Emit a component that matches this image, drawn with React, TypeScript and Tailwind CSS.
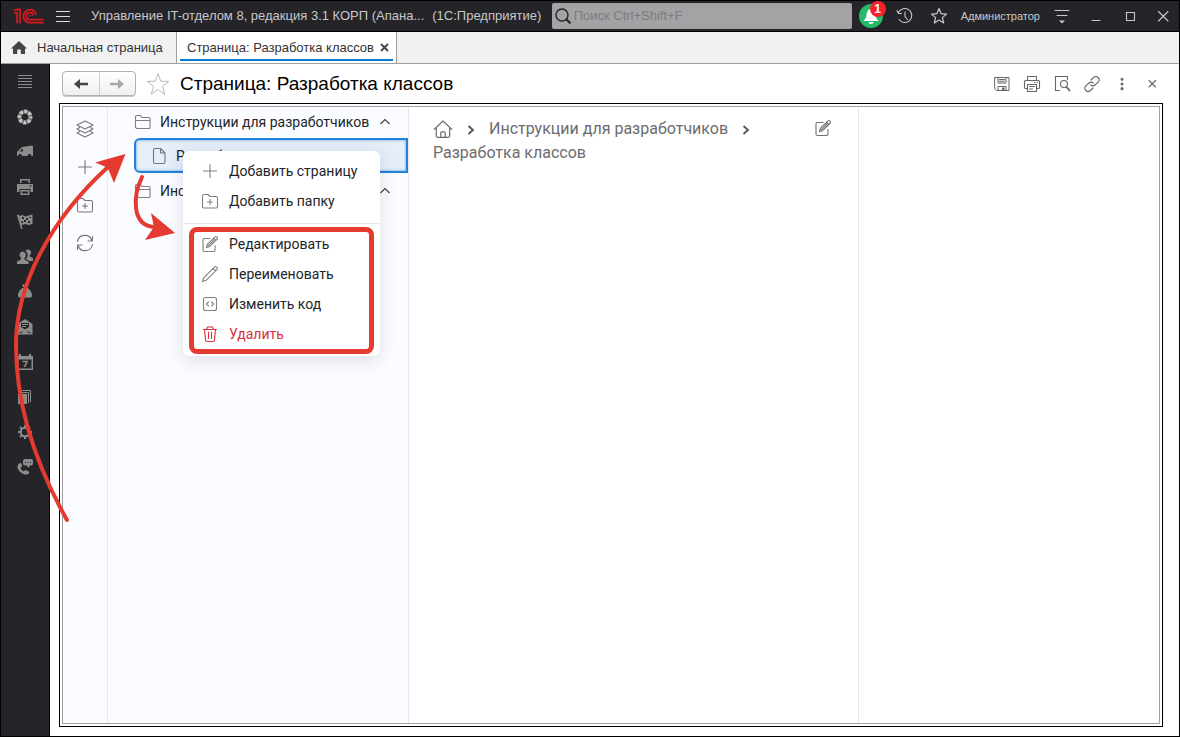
import type { ReactNode } from "react";
import { useState } from "react";

type IconProps = { children: ReactNode; size?: number; className?: string; width?: number };

// Stroke icons share one 18-unit grid
function Line({ children, size = 18, className = "", width = 1.1 }: IconProps) {
  return (
    <svg
      width={size}
      height={size}
      viewBox="0 0 18 18"
      fill="none"
      stroke="currentColor"
      strokeWidth={width}
      strokeLinecap="round"
      strokeLinejoin="round"
      className={`shrink-0 ${className}`}
      aria-hidden="true"
    >
      {children}
    </svg>
  );
}

const pencilBox = (
  <>
    <path d="M9 3.500H3.500A1.500 1.500 0 0 0 2 5v10a1.500 1.500 0 0 0 1.500 1.500h9A1.500 1.500 0 0 0 14 15v-4.500" />
    <path d="M5.500 12.500l.8-3.100L14 1.800a1.200 1.200 0 0 1 1.700 0l.5.5a1.200 1.200 0 0 1 0 1.700L8.600 11.700zM12.600 3.200l2.200 2.200M7.200 10.800L13 5" />
  </>
);
const pencil = (
  <path d="M1.500 16.500l1.200-3.700L13.600 1.900a1.300 1.300 0 0 1 1.800 0l.7.7a1.300 1.300 0 0 1 0 1.800L5.200 15.300zM12 3.500l2.500 2.500" />
);
const codeBox = (
  <>
    <rect x="2.500" y="2.500" width="13" height="13" rx="2" />
    <path d="M7.500 7L5.500 9l2 2M10.500 7l2 2-2 2" />
  </>
);
const trash = (
  <path d="M2.500 4.500h13M5.500 4.500l1-2.500h5l1 2.500M3.500 4.500l1 10.500a1.600 1.600 0 0 0 1.600 1.500h5.800a1.600 1.600 0 0 0 1.600-1.500l1-10.500M7.500 7v6.500M10.500 7v6.500" />
);
const plus = <path d="M9 2.500v13M2.500 9h13" />;
const folderPlus = (
  <>
    <path d="M1.500 14.500V4A1.500 1.500 0 0 1 3 2.500h4l2 2h6A1.500 1.500 0 0 1 16.500 6v8.500a1.500 1.500 0 0 1-1.500 1.500H3a1.500 1.500 0 0 1-1.500-1.500z" />
    <path d="M9 7.500v5M6.500 10h5" />
  </>
);
const folder = (
  <path d="M1.500 14.500v-11a1 1 0 0 1 1-1h4l1.500 2h7a1 1 0 0 1 1 1v9a1 1 0 0 1-1 1h-12a1 1 0 0 1-1-1zM1.500 7.500h14.500" />
);
const layers = (
  <path d="M9 1l8 4-8 4-8-4zM3.500 7.500L1 9l8 4 8-4-2.500-1.500M3.500 11.500L1 13l8 4 8-4-2.500-1.500" />
);
const refresh = (
  <path d="M1.500 7.500A7.500 7.500 0 0 1 16 6.500M16.500 2.500v4.500H12M16.500 10.500A7.500 7.500 0 0 1 2 11.500M1.500 15.500V11H6" />
);

const sections = [
  {
    label: "Главное",
    icon: <path d="M3 3.500h14M3 6.500h14M3 9.500h14M3 12.500h14M3 15.500h14" fill="none" stroke="currentColor" />,
  },
  {
    label: "Поддержка",
    icon: (
      <g fill="none">
        <circle cx="10" cy="10" r="5.500" stroke="#777" strokeWidth="3.600" />
        <circle
          cx="10"
          cy="10"
          r="5.500"
          stroke="#c4c4c4"
          strokeWidth="4"
          strokeDasharray="2.600 1.720"
          strokeDashoffset="1.300"
        />
      </g>
    ),
  },
  {
    label: "Закупки",
    icon: (
      <path d="M2 14v-4l5-5 10-1.500 1 1V14h-1.500a2 2 0 0 0-4 0H7a2 2 0 0 0-4 0zM4.500 9.500H8v-3z" fillRule="evenodd" />
    ),
  },
  {
    label: "Оборудование",
    icon: (
      <path
        d="M5 2h10v4H5zM6.500 3.500V6h7V3.500zM2 7h16v8h-2.500v-3h-11v3H2zM5.500 13h9v5h-9zM7 14.500v2h6v-2zM14.500 8.500h2v1h-2z"
        fillRule="evenodd"
      />
    ),
  },
  {
    label: "Проекты",
    icon: (
      <path
        d="M2 3l2-.5L7.500 17H6zM4.500 4l3-1 3 1.500 3-1 4-1V12l-4 1-3-1-4 1zM7 5v2h2V5zm4 1v2h2V6zm3-1v1h2V5zM9 8v2h2V8zm4 1v2h2V9zM6.500 9v2h1.500V9z"
        fillRule="evenodd"
      />
    ),
  },
  {
    label: "Сотрудники",
    icon: (
      <path d="M7.500 4.500a3.500 3.500 0 0 1 2 6.300v1.700l4 2V17H2v-2.500l4-2v-1.700a3.500 3.500 0 0 1 1.500-6.300zM13 2.500a3 3 0 0 1 1.800 5.500v1.500l3.200 1.700V14h-3.500l-3.500-2a5 5 0 0 0-.7-8A3 3 0 0 1 13 2.500z" />
    ),
  },
  {
    label: "Финансы",
    icon: <path d="M7 2.500h6l-1 2.500H8zM7.500 6h5c3 2 4.500 4.500 4.500 7.500 0 1.500-1 2-2 2H5c-1 0-2-.5-2-2C3 10.500 4.500 8 7.500 6z" />,
  },
  {
    label: "Почта",
    icon: (
      <path
        d="M10 2l7.500 5v10.500h-15V7zM6 6v4l4 2.500L14 10V6zM7 7h6v1H7zM7 9h4v1H7zM3.500 16h3l2-2zM16.500 16h-3l-2-2z"
        fillRule="evenodd"
      />
    ),
  },
  {
    label: "Календарь",
    icon: (
      <>
        <path d="M2 4h2V2h2v2h8V2h2v2h2v14H2zM3.500 7.500v9h13v-9z" fillRule="evenodd" />
        <path d="M7.500 9.500h4.500L9.500 15" fill="none" stroke="currentColor" strokeWidth="1.600" />
      </>
    ),
  },
  {
    label: "Справочники",
    icon: (
      <>
        <path d="M3 7h9v10H3z" />
        <path d="M5 5.500h8.500V16M7 3.500h8.500V15" fill="none" stroke="currentColor" />
      </>
    ),
  },
  {
    label: "Настройки",
    icon: (
      <g fill="none" stroke="currentColor">
        <circle cx="10" cy="10" r="4.200" strokeWidth="2" />
        <path
          d="M10 3v2.500M10 14.500V17M3 10h2.500M14.500 10H17M5 5l1.800 1.800M13.200 13.200L15 15M15 5l-1.800 1.800M6.800 13.200L5 15"
          strokeWidth="2"
        />
      </g>
    ),
  },
  {
    label: "Телефония",
    icon: (
      <>
        <path d="M4.500 6l2 .5.500 3-1.500 1.500c.5 1.500 1.800 2.800 3.200 3.300l1.800-1.300 3.500 1.500v2c-1.500 1.500-5 1.500-7.800-.8C2.500 13 1 9 4.500 6z" />
        <path
          d="M10 2h6a2 2 0 0 1 2 2v2.500a2 2 0 0 1-2 2h-1L13.500 11 12 8.500h-2a2 2 0 0 1-2-2V4a2 2 0 0 1 2-2zM10 5v1h1V5zm2.500 0v1h1V5zM15 5v1h1V5z"
          fillRule="evenodd"
        />
      </>
    ),
  },
];

const treeTools = [
  { label: "Разделы", icon: layers },
  { label: "Новая страница", icon: plus },
  { label: "Новая папка", icon: folderPlus },
  { label: "Обновить", icon: refresh },
];

const createItems = [
  { label: "Добавить страницу", icon: plus },
  { label: "Добавить папку", icon: folderPlus },
];

const editItems = [
  { label: "Редактировать", icon: pencilBox },
  { label: "Переименовать", icon: pencil },
  { label: "Изменить код", icon: codeBox },
  { label: "Удалить", icon: trash, danger: true },
];

const pageTools = [
  {
    label: "Сохранить",
    icon: (
      <>
        <path d="M2 2.500h14v13H3.500L2 14zM5 2.500v5.500h8V2.500M6.500 4.500h5M6.500 6.200h5M5 15.500v-4h8v4" strokeWidth="1" />
        <path d="M9 12.500h2.500v3H9z" fill="currentColor" stroke="none" />
      </>
    ),
  },
  {
    label: "Печать",
    icon: (
      <path d="M4.500 5.500v-4h9v4M4.500 13.500h-2a1 1 0 0 1-1-1v-6a1 1 0 0 1 1-1h13a1 1 0 0 1 1 1v6a1 1 0 0 1-1 1h-2M4.500 9.500h9v7h-9zM6.500 11.500h5M6.500 14h3M11.500 7.500h.5M14 7.500h.5" />
    ),
  },
  {
    label: "Просмотр",
    icon: (
      <>
        <path d="M6.500 15.500h-4v-14h12v3" />
        <circle cx="11" cy="9" r="3.500" />
        <path d="M13.500 12l3 3.500" strokeWidth="1.800" />
      </>
    ),
  },
  {
    label: "Получить ссылку",
    icon: (
      <path d="M8 5l2.500-2.500a3.200 3.200 0 0 1 4.600 4.600L12 10a3 3 0 0 1-4.300 0M10 13l-2.500 2.500a3.200 3.200 0 0 1-4.600-4.600L6 8a3 3 0 0 1 4.300 0" />
    ),
  },
  {
    label: "Ещё",
    icon: <path d="M9 4.200v.1M9 8.900V9M9 13.600v.1" strokeWidth="3" />,
  },
  {
    label: "Закрыть",
    icon: <path d="M6 5.500l6.500 6.500M12.500 5.500L6 12" />,
  },
];

function MenuItem({ label, icon, danger }: { label: string; icon: ReactNode; danger?: boolean }) {
  return (
    <button
      type="button"
      role="menuitem"
      className={`flex h-[30px] w-full items-center gap-2.5 pl-[18px] text-left ${
        danger ? "text-[#d9303e]" : "text-[#212529]"
      }`}
    >
      <Line className={danger ? "" : "text-[#808080]"}>{icon}</Line>
      {label}
    </button>
  );
}

function ContextMenu() {
  return (
    <div
      role="menu"
      className="absolute top-[13px] left-[49px] z-10 w-[197px] rounded-md bg-white pt-[5px] pb-[7px] shadow-[0_4px_18px_rgba(40,50,90,0.14)]"
    >
      {createItems.map((item) => (
        <MenuItem key={item.label} {...item} />
      ))}
      <hr className="mt-[7px] mb-[5px] border-[#e4e6ea]" />
      <div className="relative">
        {editItems.map((item) => (
          <MenuItem key={item.label} {...item} />
        ))}
        <div className="pointer-events-none absolute inset-x-1.5 -top-0.5 -bottom-[5px] rounded-lg border-[5px] border-[#e53a2f]" />
      </div>
    </div>
  );
}

function TitleBar() {
  const [query, setQuery] = useState("");

  return (
    <header className="flex h-[31px] items-center border-b border-black bg-[#252429] text-[#c8c8c8]">
      <svg
        className="ml-3 shrink-0"
        width="32"
        height="18"
        viewBox="0 0 32 18"
        fill="none"
        stroke="#d9181f"
        strokeWidth="1.800"
        aria-label="1С"
      >
        <path d="M1.500 6h2.600v10.500M1.200 3.600L4.500 2.500H7v14" />
        <path d="M23.200 7.500A6.500 6.500 0 1 0 17 15.700h13.500" />
        <path d="M20.200 8.500A3.500 3.500 0 1 0 17 12.600h13.500" />
        <path d="M16 9.600a1.300 1.300 0 0 1 1.800-.8" strokeWidth="1.200" />
      </svg>
      <button type="button" aria-label="Меню" className="ml-2 flex w-5 justify-center">
        <Line className="text-[#dcdcdc]">
          <path d="M2.500 4.500h13M2.500 9.500h13M2.500 14.500h13" />
        </Line>
      </button>
      <div className="ml-[18px] flex min-w-0 flex-1 gap-2 text-[13px] whitespace-nowrap">
        <span>Управление IT-отделом 8, редакция 3.1 КОРП (Апана...</span>
        <span>(1С:Предприятие)</span>
      </div>
      <div className="flex h-[26px] w-[300px] items-center rounded-xs bg-[#a3a3a5]">
        <Line className="ml-0.5 text-[#262626]" width={1.4}>
          <circle cx="8" cy="8" r="6" />
          <path d="M12.500 12.500l3.300 3.300" strokeWidth="2.200" />
        </Line>
        <input
          type="text"
          aria-label="Поиск"
          placeholder="Поиск Ctrl+Shift+F"
          value={query}
          onChange={(e) => setQuery(e.target.value)}
          className="ml-0.5 min-w-0 flex-1 bg-transparent text-[13px] text-black outline-none placeholder:text-[#7b7b7d]"
        />
      </div>
      <button type="button" aria-label="Уведомления" className="relative ml-0.5 flex w-[34px] justify-center">
        <svg width="24" height="24" viewBox="0 0 24 24" aria-hidden="true">
          <circle cx="12" cy="12" r="12" fill="#22bb6a" />
          <path
            d="M12 5c3 0 4 2.500 4.500 6 .4 2.500 1 4 3 6h-15c2-2 2.600-3.500 3-6C8 7.500 9 5 12 5zM9.500 18h5a2.500 2 0 0 1-5 0z"
            fill="#fff"
          />
        </svg>
        <span className="absolute -top-[3px] right-0.5 flex size-4 items-center justify-center rounded-full bg-[#f5222d] text-xs font-bold text-white">
          1
        </span>
      </button>
      <button type="button" aria-label="История" className="flex w-[34px] justify-center">
        <Line>
          <path d="M2.500 5.500A7 7 0 1 1 3 12.500M1 3.500l1.500 3h3M9 5v4.500l2.500 3" />
        </Line>
      </button>
      <button type="button" aria-label="Избранное" className="flex w-[34px] justify-center">
        <Line>
          <path
            d="M9 1.500l2.100 5.200 5.400.4-4.100 3.500 1.300 5.400L9 13.100 4.300 16l1.300-5.400L1.500 7.100l5.400-.4z"
            strokeWidth="1.200"
          />
        </Line>
      </button>
      <button type="button" className="px-[5px] text-[11px]">
        Администратор
      </button>
      <button type="button" aria-label="Сервис" className="flex w-[34px] justify-center">
        <Line>
          <path d="M2 3.500h14M4 8.500h10" />
          <path d="M6 13.500h6l-3 3z" fill="currentColor" stroke="none" />
        </Line>
      </button>
      <button type="button" aria-label="Свернуть" className="flex w-[34px] justify-center">
        <Line>
          <path d="M5 13.500h8" />
        </Line>
      </button>
      <button type="button" aria-label="Развернуть" className="flex w-[34px] justify-center">
        <Line>
          <path d="M5.500 5.500h8v8h-8z" strokeLinejoin="miter" />
        </Line>
      </button>
      <button type="button" aria-label="Закрыть окно" className="flex w-8 justify-center">
        <Line>
          <path d="M4.500 4.500l9.500 9.500M14 4.500L4.500 14" />
        </Line>
      </button>
    </header>
  );
}

function TabBar() {
  return (
    <nav className="flex h-8 border-b border-[#a0a0a0] bg-[#f1f1f1] text-[13px] text-[#333]">
      <a href="#home" className="flex w-44 items-center border-r border-[#a0a0a0] pl-2.5">
        <svg width="16" height="14" viewBox="0 0 16 14" fill="#444" aria-hidden="true">
          <path d="M8 0l8 7.500h-2V13H9.800V8.500H6.200V13H2V7.500H0z" />
        </svg>
        <span className="ml-2.5">Начальная страница</span>
      </a>
      <div className="flex border-r border-[#a0a0a0] bg-white px-[3px] pb-0.5">
        <div className="flex items-center gap-1.5 border-b-2 border-[#0a7bd0] pt-1 pr-1 pl-[7px]">
          <a href="#page">Страница: Разработка классов</a>
          <button type="button" aria-label="Закрыть вкладку">
            <svg width="9" height="9" viewBox="0 0 9 9" fill="none" stroke="#444" strokeWidth="1.800" aria-hidden="true">
              <path d="M1 1l7 7M8 1L1 8" />
            </svg>
          </button>
        </div>
      </div>
    </nav>
  );
}

function PageHeader() {
  return (
    <div className="flex h-[39px] items-center px-3">
      <div className="flex h-[25px] w-[74px] rounded-sm border border-[#b0b0b0] bg-linear-to-b from-white to-[#f0f0f0] shadow-[0_1px_0_#c8c8c8]">
        <button
          type="button"
          aria-label="Назад"
          className="flex flex-1 items-center justify-center border-r border-[#cfcfcf]"
        >
          <svg width="14" height="12" viewBox="0 0 14 12" fill="#444" aria-hidden="true">
            <path d="M0 6l6-5v3.800h8v2.400H6V11z" />
          </svg>
        </button>
        <button type="button" aria-label="Вперёд" className="flex flex-1 items-center justify-center">
          <svg width="14" height="12" viewBox="0 0 14 12" fill="#a8a8a8" aria-hidden="true">
            <path d="M14 6L8 1v3.800H0v2.400h8V11z" />
          </svg>
        </button>
      </div>
      <button type="button" aria-label="В избранное" className="ml-2.5">
        <svg width="24" height="24" viewBox="0 0 24 24" fill="none" stroke="#b4bac0" aria-hidden="true">
          <path d="M12 1.500l2.700 7.700 8.300.2-6.600 5 2.400 7.900L12 17.500l-6.800 4.800 2.400-7.900L1 9.400l8.300-.2z" />
        </svg>
      </button>
      <h1 className="ml-2.5 min-w-0 flex-1 truncate pt-0.5 text-[19px] text-black">Страница: Разработка классов</h1>
      <div className="flex text-[#666]">
        {pageTools.map((tool) => (
          <button key={tool.label} type="button" aria-label={tool.label} className="flex w-[30px] justify-center">
            <Line>{tool.icon}</Line>
          </button>
        ))}
      </div>
    </div>
  );
}

function FolderRow({ label, className = "" }: { label: string; className?: string }) {
  return (
    <button
      type="button"
      aria-expanded="true"
      className={`flex w-full items-center pr-[18px] pl-[26px] text-left ${className}`}
    >
      <Line className="text-[#808080]">{folder}</Line>
      <span className="ml-2 flex-1 truncate">{label}</span>
      <svg width="10" height="7" viewBox="0 0 10 7" fill="none" stroke="#444" strokeWidth="1.200" aria-hidden="true">
        <path d="M.5 6L5 1.500 9.500 6" />
      </svg>
    </button>
  );
}

function PageTree() {
  return (
    <div className="w-[301px] shrink-0 border-r border-[#e8e9ee] bg-[#fbfcff] font-[Roboto,sans-serif] text-sm text-[#212529]">
      <FolderRow label="Инструкции для разработчиков" className="mb-0.5 h-[29px]" />
      <div className="relative ml-[26px]">
        <button
          type="button"
          className="flex h-[35px] w-full items-center gap-2 rounded-l-md border-2 border-[#2580da] bg-[#e6eefa] pl-3.5 text-left shadow-[inset_0_0_2px_1px_#9cc6f2]"
        >
          <Line className="text-[#707780]">
            <path d="M3.500 15V3A1.500 1.500 0 0 1 5 1.500h5.500l4.500 4.500v9a1.500 1.500 0 0 1-1.500 1.500H5A1.500 1.500 0 0 1 3.500 15zM10.500 1.500V6H15" />
          </Line>
          Разработка классов
        </button>
        <ContextMenu />
      </div>
      <FolderRow label="Инструкции" className="h-[35px]" />
    </div>
  );
}

function Chevron() {
  return (
    <svg
      className="mx-3.5 inline-block"
      width="8"
      height="10"
      viewBox="0 0 8 10"
      fill="none"
      stroke="#555"
      strokeWidth="1.800"
      aria-hidden="true"
    >
      <path d="M1.500 1L6 5 1.500 9" />
    </svg>
  );
}

function Article() {
  return (
    <main className="flex w-3/5 items-start border-r border-[#e8e9ee] pt-2.5 pr-[26px] pl-6 font-[Roboto,sans-serif]">
      <nav className="min-w-0 flex-1 text-base leading-6 text-[#6c6c70]">
        <a href="#root" aria-label="Корень">
          <Line size={20} className="inline-block align-[-5px]">
            <path d="M1 9.300L9 1.800l8 7.500M3 7.700v7.600a1.200 1.200 0 0 0 1.200 1.200h9.600a1.200 1.200 0 0 0 1.200-1.200V7.700M7 16.500v-4a1 1 0 0 1 1-1h2a1 1 0 0 1 1 1v4" />
          </Line>
        </a>
        <Chevron />
        <a href="#developers">Инструкции для разработчиков</a>
        <Chevron />
        <span className="block">Разработка классов</span>
      </nav>
      <button type="button" aria-label="Редактировать страницу" className="pt-0.5 text-[#707070]">
        <Line>{pencilBox}</Line>
      </button>
    </main>
  );
}

// Arrows run across the sidebar, the toolbar and the tree
function Arrows() {
  return (
    <svg
      className="pointer-events-none absolute top-0 left-0 z-20"
      width="200"
      height="530"
      viewBox="1 1 200 530"
      fill="none"
      aria-hidden="true"
    >
      <g stroke="#e53a2f" strokeWidth="4" strokeLinecap="round">
        <path d="M67 520C36 465 16 405 16 345S50 220 108 167" />
        <path d="M142 177C133 196 131 226 155 227" />
      </g>
      <path d="M125.500 154L95 162.500l12.500 5L114 183zM175 233l-24-20 3 14-9 13z" fill="#e53a2f" />
    </svg>
  );
}

export default function App() {
  return (
    <div className="relative flex min-h-screen flex-col border border-black bg-white font-['Liberation_Sans',Arial,sans-serif]">
      <TitleBar />
      <TabBar />
      <div className="flex flex-1">
        <nav className="w-[49px] shrink-0 border-r border-black bg-[#252429] text-[#8c8c8c]">
          {sections.map((section) => (
            <a
              key={section.label}
              href="#section"
              aria-label={section.label}
              className="flex h-[35px] items-center justify-center"
            >
              <svg width="20" height="20" viewBox="0 0 20 20" fill="currentColor" aria-hidden="true">
                {section.icon}
              </svg>
            </a>
          ))}
        </nav>
        <div className="flex min-w-0 flex-1 flex-col">
          <PageHeader />
          <div className="mr-4 mb-[9px] ml-[9px] flex flex-1 border border-black p-0.5">
            <div className="flex min-w-0 flex-1 border border-[#a0a0a0]">
              <div className="w-[45px] shrink-0 border-r border-[#e8e9ee] bg-[#fbfcff] pt-[3px] text-[#777]">
                {treeTools.map((tool) => (
                  <button
                    key={tool.label}
                    type="button"
                    aria-label={tool.label}
                    className="flex h-[38px] w-full items-center justify-center"
                  >
                    <Line>{tool.icon}</Line>
                  </button>
                ))}
              </div>
              <PageTree />
              <div className="flex min-w-0 flex-1">
                <Article />
              </div>
            </div>
          </div>
        </div>
      </div>
      <Arrows />
    </div>
  );
}
